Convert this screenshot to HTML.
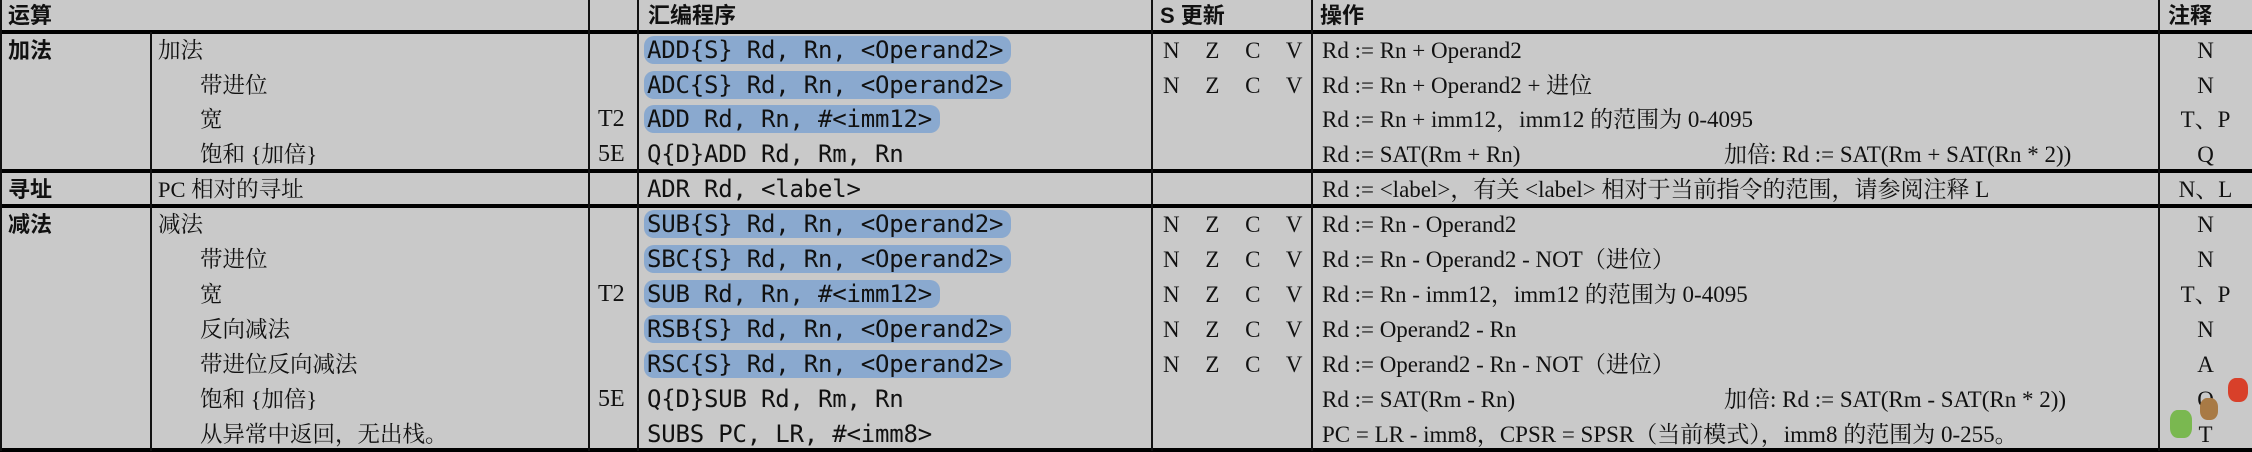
<!DOCTYPE html>
<html><head><meta charset="utf-8"><style>
body{margin:0;width:2252px;height:451px;background:#c9c9c9;position:relative;overflow:hidden;font-family:"Liberation Serif","Noto Serif CJK SC",serif;font-size:23px;color:#111}
.t{position:absolute;white-space:pre;line-height:35px;height:35px}
.h{font-family:"Liberation Sans","Noto Sans CJK SC",sans-serif;font-weight:bold;font-size:22px;line-height:32px;height:32px;top:0}
.b{font-family:"Liberation Sans","Noto Sans CJK SC",sans-serif;font-weight:bold;font-size:22px}
.c{font-family:"DejaVu Sans Mono","Liberation Mono",monospace;font-size:24px;letter-spacing:-0.2px}
.hl{background:#8aa9cf;border-radius:10px;padding:0 8px 0 3px;margin-left:-3px}
.v{position:absolute;width:2px;background:#111}
.hz{position:absolute;left:0;width:2252px;height:4px;background:#000}
.n{text-align:center;width:93px;left:2159px}
.cj{font-size:22.5px}
.z{word-spacing:20px}
</style></head><body>
<div class="hz" style="top:30px"></div>
<div class="hz" style="top:169px"></div>
<div class="hz" style="top:204px"></div>
<div class="hz" style="top:448px"></div>
<div class="v" style="left:0;top:0;height:451px"></div>
<div class="v" style="left:150px;top:32px;height:419px"></div>
<div class="v" style="left:588px;top:0;height:451px"></div>
<div class="v" style="left:637px;top:0;height:451px"></div>
<div class="v" style="left:1151px;top:0;height:451px"></div>
<div class="v" style="left:1311px;top:0;height:451px"></div>
<div class="v" style="left:2158px;top:0;height:451px"></div>

<div class="t h" style="left:8px">运算</div>
<div class="t h" style="left:648px">汇编程序</div>
<div class="t h" style="left:1160px">S 更新</div>
<div class="t h" style="left:1320px">操作</div>
<div class="t h" style="left:2168px">注释</div>

<div class="t b" style="left:8px;top:33px">加法</div>
<div class="t cj" style="left:158px;top:33px">加法</div>
<div class="t cj" style="left:200px;top:68px">带进位</div>
<div class="t cj" style="left:200px;top:102px">宽</div>
<div class="t cj" style="left:200px;top:137px">饱和 {加倍}</div>
<div class="t b" style="left:8px;top:172px">寻址</div>
<div class="t cj" style="left:158px;top:172px">PC 相对的寻址</div>
<div class="t b" style="left:8px;top:207px">减法</div>
<div class="t cj" style="left:158px;top:207px">减法</div>
<div class="t cj" style="left:200px;top:242px">带进位</div>
<div class="t cj" style="left:200px;top:277px">宽</div>
<div class="t cj" style="left:200px;top:312px">反向减法</div>
<div class="t cj" style="left:200px;top:347px">带进位反向减法</div>
<div class="t cj" style="left:200px;top:382px">饱和 {加倍}</div>
<div class="t cj" style="left:200px;top:417px">从异常中返回，无出栈。</div>

<div class="t" style="left:598px;top:102px;font-size:24px">T2</div>
<div class="t" style="left:598px;top:137px;font-size:24px">5E</div>
<div class="t" style="left:598px;top:277px;font-size:24px">T2</div>
<div class="t" style="left:598px;top:382px;font-size:24px">5E</div>

<div class="t c" style="left:647px;top:33px"><span class="hl">ADD{S} Rd, Rn, &lt;Operand2&gt;</span></div>
<div class="t c" style="left:647px;top:68px"><span class="hl">ADC{S} Rd, Rn, &lt;Operand2&gt;</span></div>
<div class="t c" style="left:647px;top:102px"><span class="hl">ADD Rd, Rn, #&lt;imm12&gt;</span></div>
<div class="t c" style="left:647px;top:137px">Q{D}ADD Rd, Rm, Rn</div>
<div class="t c" style="left:647px;top:172px">ADR Rd, &lt;label&gt;</div>
<div class="t c" style="left:647px;top:207px"><span class="hl">SUB{S} Rd, Rn, &lt;Operand2&gt;</span></div>
<div class="t c" style="left:647px;top:242px"><span class="hl">SBC{S} Rd, Rn, &lt;Operand2&gt;</span></div>
<div class="t c" style="left:647px;top:277px"><span class="hl">SUB Rd, Rn, #&lt;imm12&gt;</span></div>
<div class="t c" style="left:647px;top:312px"><span class="hl">RSB{S} Rd, Rn, &lt;Operand2&gt;</span></div>
<div class="t c" style="left:647px;top:347px"><span class="hl">RSC{S} Rd, Rn, &lt;Operand2&gt;</span></div>
<div class="t c" style="left:647px;top:382px">Q{D}SUB Rd, Rm, Rn</div>
<div class="t c" style="left:647px;top:417px">SUBS PC, LR, #&lt;imm8&gt;</div>

<div class="t z" style="left:1163px;top:33px">N Z C V</div>
<div class="t z" style="left:1163px;top:68px">N Z C V</div>
<div class="t z" style="left:1163px;top:207px">N Z C V</div>
<div class="t z" style="left:1163px;top:242px">N Z C V</div>
<div class="t z" style="left:1163px;top:277px">N Z C V</div>
<div class="t z" style="left:1163px;top:312px">N Z C V</div>
<div class="t z" style="left:1163px;top:347px">N Z C V</div>

<div class="t" style="left:1322px;top:33px">Rd := Rn + Operand2</div>
<div class="t" style="left:1322px;top:68px">Rd := Rn + Operand2 + 进位</div>
<div class="t" style="left:1322px;top:102px">Rd := Rn + imm12，imm12 的范围为 0-4095</div>
<div class="t" style="left:1322px;top:137px">Rd := SAT(Rm + Rn)</div>
<div class="t" style="left:1724px;top:137px">加倍: Rd := SAT(Rm + SAT(Rn * 2))</div>
<div class="t" style="left:1322px;top:172px">Rd := &lt;label&gt;，有关 &lt;label&gt; 相对于当前指令的范围，请参阅注释 L</div>
<div class="t" style="left:1322px;top:207px">Rd := Rn - Operand2</div>
<div class="t" style="left:1322px;top:242px">Rd := Rn - Operand2 - NOT（进位）</div>
<div class="t" style="left:1322px;top:277px">Rd := Rn - imm12，imm12 的范围为 0-4095</div>
<div class="t" style="left:1322px;top:312px">Rd := Operand2 - Rn</div>
<div class="t" style="left:1322px;top:347px">Rd := Operand2 - Rn - NOT（进位）</div>
<div class="t" style="left:1322px;top:382px">Rd := SAT(Rm - Rn)</div>
<div class="t" style="left:1724px;top:382px">加倍: Rd := SAT(Rm - SAT(Rn * 2))</div>
<div class="t" style="left:1322px;top:417px">PC = LR - imm8，CPSR = SPSR（当前模式），imm8 的范围为 0-255。</div>

<div class="t n" style="top:33px">N</div>
<div class="t n" style="top:68px">N</div>
<div class="t n" style="top:102px">T、P</div>
<div class="t n" style="top:137px">Q</div>
<div class="t n" style="top:172px">N、L</div>
<div class="t n" style="top:207px">N</div>
<div class="t n" style="top:242px">N</div>
<div class="t n" style="top:277px">T、P</div>
<div class="t n" style="top:312px">N</div>
<div class="t n" style="top:347px">A</div>
<div class="t n" style="top:382px">Q</div>
<div class="t n" style="top:417px">T</div>
<div style="position:absolute;left:2228px;top:378px;width:20px;height:24px;background:#d8402a;border-radius:40%"></div>
<div style="position:absolute;left:2200px;top:398px;width:18px;height:22px;background:#a87a45;border-radius:40%"></div>
<div style="position:absolute;left:2170px;top:410px;width:22px;height:28px;background:#7ab850;border-radius:35%"></div>
</body></html>
